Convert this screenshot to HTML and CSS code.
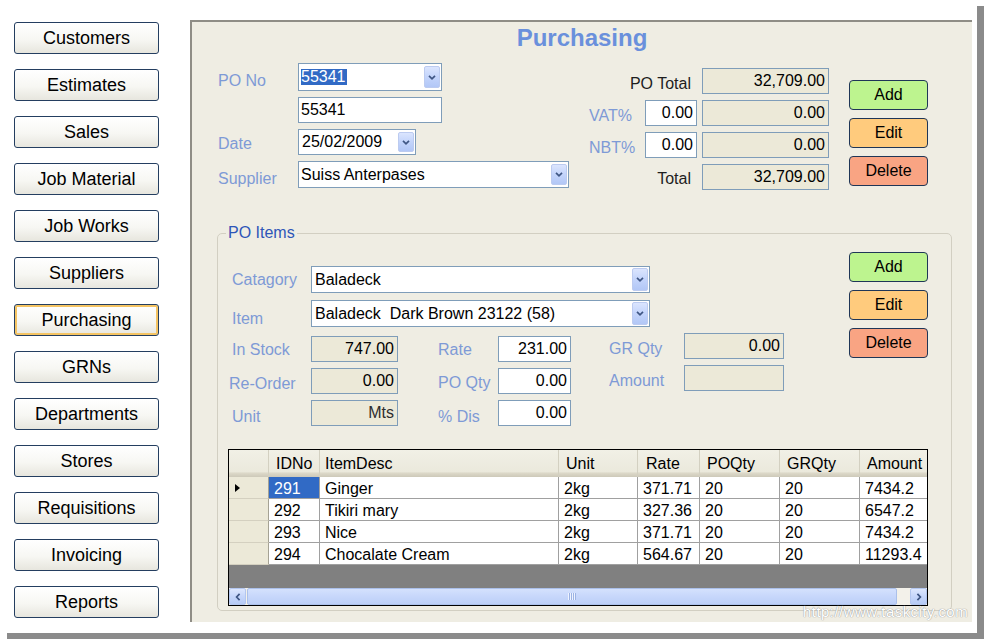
FILE: index.html
```html
<!DOCTYPE html>
<html>
<head>
<meta charset="utf-8">
<title>Purchasing</title>
<link rel="stylesheet" href="styles.css">
</head>
<body>
<div class="screen">
  <nav class="sidebar">
    <button class="navbtn">Customers</button>
    <button class="navbtn">Estimates</button>
    <button class="navbtn">Sales</button>
    <button class="navbtn">Job Material</button>
    <button class="navbtn">Job Works</button>
    <button class="navbtn">Suppliers</button>
    <button class="navbtn active">Purchasing</button>
    <button class="navbtn">GRNs</button>
    <button class="navbtn">Departments</button>
    <button class="navbtn">Stores</button>
    <button class="navbtn">Requisitions</button>
    <button class="navbtn">Invoicing</button>
    <button class="navbtn">Reports</button>
  </nav>

  <main class="panel">
    <h1 class="title">Purchasing</h1>

    <section class="po-top">
      <div class="po-fields">
        <div class="frow r1">
          <span class="flabel">PO No</span>
          <div class="combo w144 h28"><span class="ctext"><span class="seltext">55341</span></span><span class="dd"><svg width="8" height="5" viewBox="0 0 8 5"><path d="M1 0.8 L4 3.8 L7 0.8" fill="none" stroke="#3f5684" stroke-width="1.7"/></svg></span></div>
        </div>
        <div class="frow r2">
          <span class="flabel"></span>
          <div class="tbox w144 h26">55341</div>
        </div>
        <div class="frow r3">
          <span class="flabel">Date</span>
          <div class="combo w118 h26"><span class="ctext pl1">25/02/2009</span><span class="dd"><svg width="8" height="5" viewBox="0 0 8 5"><path d="M1 0.8 L4 3.8 L7 0.8" fill="none" stroke="#3f5684" stroke-width="1.7"/></svg></span></div>
        </div>
        <div class="frow r4">
          <span class="flabel">Supplier</span>
          <div class="combo w272 h27"><span class="ctext">Suiss Anterpases</span><span class="dd"><svg width="8" height="5" viewBox="0 0 8 5"><path d="M1 0.8 L4 3.8 L7 0.8" fill="none" stroke="#3f5684" stroke-width="1.7"/></svg></span></div>
        </div>
      </div>

      <div class="totals">
        <span class="tlabel dark span2">PO Total</span>
        <div class="robox num tcol">32,709.00</div>
        <span class="tlabel">VAT%</span>
        <div class="tbox num">0.00</div>
        <div class="robox num tcol">0.00</div>
        <span class="tlabel">NBT%</span>
        <div class="tbox num">0.00</div>
        <div class="robox num tcol">0.00</div>
        <span class="tlabel dark span2 pt6">Total</span>
        <div class="robox num tcol">32,709.00</div>
      </div>

      <div class="actions top-actions">
        <button class="act add">Add</button>
        <button class="act edit">Edit</button>
        <button class="act delete">Delete</button>
      </div>
    </section>

    <fieldset class="items">
      <legend>PO Items</legend>
      <div class="items-top">
        <div class="item-fields">
          <div class="irow h27">
            <span class="ilabel c1 pt5 pl3">Catagory</span>
            <div class="combo w339 h27"><span class="ctext pl1">Baladeck</span><span class="dd dd24"><svg width="8" height="5" viewBox="0 0 8 5"><path d="M1 0.8 L4 3.8 L7 0.8" fill="none" stroke="#3f5684" stroke-width="1.7"/></svg></span></div>
          </div>
          <div class="irow h27 mt7">
            <span class="ilabel c1 pt10 pl3">Item</span>
            <div class="combo w339 h27"><span class="ctext pl1">Baladeck&nbsp; Dark Brown 23122 (58)</span><span class="dd dd24"><svg width="8" height="5" viewBox="0 0 8 5"><path d="M1 0.8 L4 3.8 L7 0.8" fill="none" stroke="#3f5684" stroke-width="1.7"/></svg></span></div>
          </div>
          <div class="irow h26 mt9">
            <span class="ilabel c1 pt5 pl3">In Stock</span>
            <div class="robox num w87">747.00</div>
            <span class="ilabel c3 pt5">Rate</span>
            <div class="tbox num w73">231.00</div>
            <span class="ilabel c5 pt4">GR Qty</span>
            <div class="robox num w100 up3">0.00</div>
          </div>
          <div class="irow h26 mt6">
            <span class="ilabel c1 pt7">Re-Order</span>
            <div class="robox num w87">0.00</div>
            <span class="ilabel c3 pt6">PO Qty</span>
            <div class="tbox num w73">0.00</div>
            <span class="ilabel c5 pt4">Amount</span>
            <div class="robox num w100 up3"></div>
          </div>
          <div class="irow h26 mt6">
            <span class="ilabel c1 pt8 pl3">Unit</span>
            <div class="robox num w87 dim">Mts</div>
            <span class="ilabel c3 pt8">% Dis</span>
            <div class="tbox num w73">0.00</div>
          </div>
        </div>
        <div class="actions item-actions">
          <button class="act add">Add</button>
          <button class="act edit">Edit</button>
          <button class="act delete">Delete</button>
        </div>
      </div>

      <div class="dgv">
        <div class="dg-row dg-head">
          <div class="hc"></div>
          <div class="hc">IDNo</div>
          <div class="hc hc5">ItemDesc</div>
          <div class="hc">Unit</div>
          <div class="hc hc8">Rate</div>
          <div class="hc">POQty</div>
          <div class="hc">GRQty</div>
          <div class="hc last">Amount</div>
        </div>
        <div class="dg-row">
          <div class="rh"><span class="tri"></span></div>
          <div class="c selcell">291</div>
          <div class="c">Ginger</div>
          <div class="c">2kg</div>
          <div class="c">371.71</div>
          <div class="c">20</div>
          <div class="c">20</div>
          <div class="c last">7434.2</div>
        </div>
        <div class="dg-row">
          <div class="rh"></div>
          <div class="c">292</div>
          <div class="c">Tikiri mary</div>
          <div class="c">2kg</div>
          <div class="c">327.36</div>
          <div class="c">20</div>
          <div class="c">20</div>
          <div class="c last">6547.2</div>
        </div>
        <div class="dg-row">
          <div class="rh"></div>
          <div class="c">293</div>
          <div class="c">Nice</div>
          <div class="c">2kg</div>
          <div class="c">371.71</div>
          <div class="c">20</div>
          <div class="c">20</div>
          <div class="c last">7434.2</div>
        </div>
        <div class="dg-row">
          <div class="rh"></div>
          <div class="c">294</div>
          <div class="c">Chocalate Cream</div>
          <div class="c">2kg</div>
          <div class="c">564.67</div>
          <div class="c">20</div>
          <div class="c">20</div>
          <div class="c last">11293.4</div>
        </div>
        <div class="dg-empty"></div>
        <div class="hscroll">
          <span class="sb-btn"><svg width="6" height="8" viewBox="0 0 6 8"><path d="M4.6 0.8 L1.6 4 L4.6 7.2" fill="none" stroke="#3f5684" stroke-width="1.7"/></svg></span>
          <span class="sb-thumb"><span class="grip"></span></span>
          <span class="sb-btn sb-right"><svg width="6" height="8" viewBox="0 0 6 8"><path d="M1.4 0.8 L4.4 4 L1.4 7.2" fill="none" stroke="#3f5684" stroke-width="1.7"/></svg></span>
        </div>
      </div>
    </fieldset>
  </main>

  <div class="watermark">http://www.taskcity.com</div>
</div>
</body>
</html>
```

FILE: styles.css
```css
* { box-sizing: border-box; }

html, body {
  margin: 0;
  padding: 0;
  background: #ffffff;
}

body {
  font-family: "Liberation Sans", Arial, sans-serif;
  font-size: 16px;
  color: #000;
  width: 984px;
  height: 639px;
  overflow: hidden;
}

.screen {
  position: relative;
  width: 977px;
  height: 633px;
  background: #ffffff;
  box-shadow: 7px 6px 0 #8b8b8b;
  display: flex;
  align-items: flex-start;
}

/* ---------- sidebar ---------- */
.sidebar {
  width: 190px;
  flex: none;
  padding: 22px 0 0 14px;
  display: flex;
  flex-direction: column;
  gap: 15px;
}

.navbtn {
  width: 145px;
  height: 32px;
  padding: 0;
  border: 1px solid #243e60;
  border-radius: 3px;
  background: linear-gradient(#ffffff 0%, #f7f7f3 55%, #e7e6de 100%);
  font-family: "Liberation Sans", Arial, sans-serif;
  font-size: 18px;
  line-height: 30px;
  color: #000;
  text-align: center;
}

.navbtn.active {
  box-shadow: inset 0 0 0 2px #f5c463;
}

/* ---------- main panel ---------- */
.panel {
  margin-top: 20px;
  width: 782px;
  height: 602px;
  border-left: 2px solid #8f8d86;
  border-top: 2px solid #8f8d86;
  background: #efede3;
}

.title {
  margin: 2px 0 0;
  font-family: "Liberation Sans", Arial, sans-serif;
  font-weight: bold;
  font-size: 24px;
  line-height: 28px;
  color: #6a90dc;
  text-align: center;
}

.po-top {
  display: flex;
  align-items: flex-start;
  margin-top: 11px;
  padding-left: 26px;
}

.po-fields {
  width: 351px;
  flex: none;
}

.frow {
  display: flex;
  align-items: flex-start;
}

.flabel {
  width: 80px;
  flex: none;
  color: #7e9ad6;
  line-height: 18px;
}

.r1 .flabel { padding-top: 9px; }
.r2 { margin-top: 6px; }
.r3 { margin-top: 6px; }
.r3 .flabel { padding-top: 6px; }
.r4 { margin-top: 6px; }
.r4 .flabel { padding-top: 9px; }

/* ---------- inputs ---------- */
.combo, .tbox, .robox {
  border: 1px solid #7f9db9;
  background: #ffffff;
  display: flex;
  align-items: center;
  line-height: 18px;
  white-space: nowrap;
  overflow: hidden;
  height: 26px;
}

.combo { padding: 0 1px 0 2px; }
.tbox { padding: 0 3px 0 2px; }
.robox { background: #ece9d8; padding: 0 3px 0 2px; }
.num { justify-content: flex-end; }
.dim { color: #2e2e2e; }

.ctext { flex: 1; overflow: hidden; }
.pl1 { padding-left: 1px; }

.seltext {
  display: inline-block;
  line-height: 16px;
  background: #316ac5;
  color: #ffffff;
  padding: 0 1px 0 0;
}

.dd {
  width: 16px;
  flex: none;
  align-self: stretch;
  margin: 2px 0;
  border: 1px solid #bccbf0;
  border-radius: 2px;
  background: linear-gradient(#dbe5fe 0%, #c3d4fb 50%, #b2c7f6 100%);
  display: flex;
  align-items: center;
  justify-content: center;
}

.dd24 { margin: 1px 0; }

.w144 { width: 144px; }
.w118 { width: 118px; }
.w272 { width: 272px; }
.w339 { width: 339px; }
.w87 { width: 87px; flex: none; }
.w73 { width: 73px; flex: none; }
.w100 { width: 100px; flex: none; }
.h28 { height: 28px; }
.h26 { height: 26px; }
.h27 { height: 27px; }

/* ---------- totals ---------- */
.totals {
  margin-left: 20px;
  margin-top: 5px;
  display: grid;
  grid-template-columns: 56px 52px 5px 127px;
  grid-auto-rows: 26px;
  row-gap: 6px;
  width: 240px;
  flex: none;
}

.tlabel {
  color: #7e9ad6;
  line-height: 18px;
  padding-top: 7px;
}

.tlabel.dark { color: #1e1e1e; }
.span2 { grid-column: 1 / 3; text-align: right; padding-right: 6px; }
.tlabel.pt6 { padding-top: 6px; }
.tcol { grid-column: 4; }

/* ---------- action buttons ---------- */
.actions {
  display: flex;
  flex-direction: column;
  gap: 8px;
  width: 79px;
  flex: none;
}

.top-actions {
  margin-left: 20px;
  margin-top: 17px;
}

.act {
  height: 30px;
  padding: 0;
  border: 1px solid #1f3657;
  border-radius: 4px;
  font-family: "Liberation Sans", Arial, sans-serif;
  font-size: 16px;
  line-height: 28px;
  color: #000;
}

.add { background: #bdf48f; }
.edit { background: #ffcb7d; }
.delete { background: #f9a483; }

/* ---------- PO items group ---------- */
.items {
  margin: 34px 0 0 25px;
  width: 735px;
  min-width: 0;
  padding: 10px 23px 4px 10px;
  border: 1px solid #d2cfc2;
  border-radius: 5px;
}

.items legend {
  margin-left: -2px;
  padding: 0 2px;
  font-size: 16px;
  line-height: 18px;
  color: #2d56b8;
}

.items-top {
  display: flex;
  align-items: flex-start;
}

.item-fields {
  margin: 14px 0 0 1px;
  width: 555px;
}

.irow {
  display: flex;
  align-items: flex-start;
}

.mt6 { margin-top: 6px; }
.mt7 { margin-top: 7px; }
.mt9 { margin-top: 9px; }

.ilabel {
  flex: none;
  color: #7e9ad6;
  line-height: 18px;
  white-space: nowrap;
}

.c1 { width: 82px; }
.c3 { width: 100px; padding-left: 40px; }
.c5 { width: 113px; padding-left: 38px; }
.pl3 { padding-left: 3px; }
.pt4 { padding-top: 4px; }
.pt5 { padding-top: 5px; }
.pt6 { padding-top: 6px; }
.pt7 { padding-top: 7px; }
.pt8 { padding-top: 8px; }
.pt10 { padding-top: 10px; }
.up3 { margin-top: -3px; }

.item-actions { margin-left: auto; }

/* ---------- data grid ---------- */
.dgv {
  margin-top: 23px;
  width: 700px;
  height: 157px;
  border: 1px solid #000;
  background: #808080;
  display: flex;
  flex-direction: column;
}

.dg-row {
  display: grid;
  grid-template-columns: 40px 51px 239px 79px 62px 80px 80px 67px;
  flex: none;
  height: 22px;
  background: #ffffff;
}

.dg-head {
  height: 27px;
  background: linear-gradient(#f1f0e6 0%, #ebe9dc 80%, #dcd8c8 86%, #cdc9b9 100%);
}

.hc {
  line-height: 26px;
  padding: 1px 0 0 7px;
  border-right: 1px solid #d3d0c1;
  white-space: nowrap;
  overflow: hidden;
}

.hc5 { padding-left: 5px; }
.hc8 { padding-left: 8px; }

.c {
  height: 22px;
  line-height: 20px;
  padding: 2px 0 0 5px;
  border-right: 1px solid #a0a0a0;
  border-bottom: 1px solid #a0a0a0;
  white-space: nowrap;
  overflow: hidden;
}

.last { border-right: none; }

.selcell {
  background: #316ac5;
  color: #ffffff;
}

.rh {
  height: 22px;
  background: #ece9d8;
  border-right: 1px solid #a5a294;
  border-bottom: 1px solid #d4d0c0;
  display: flex;
  align-items: center;
  padding-left: 6px;
}

.tri {
  width: 0;
  height: 0;
  border-left: 5px solid #000;
  border-top: 4px solid transparent;
  border-bottom: 4px solid transparent;
}

.dg-empty {
  flex: 1;
  background: #808080;
}

.hscroll {
  height: 17px;
  flex: none;
  display: flex;
  background: #f3f1ea;
}

.sb-btn {
  width: 17px;
  flex: none;
  border: 1px solid #b3c6ef;
  border-radius: 2px;
  background: linear-gradient(#dde7fe 0%, #c6d6fb 50%, #b6cbf6 100%);
  display: flex;
  align-items: center;
  justify-content: center;
}

.sb-thumb {
  width: 650px;
  flex: none;
  margin-left: 1px;
  border: 1px solid #abc0ea;
  border-radius: 2px;
  background: linear-gradient(#d4e1fd 0%, #c7d7fb 50%, #bccff7 100%);
  display: flex;
  align-items: center;
  justify-content: center;
}

.grip {
  width: 8px;
  height: 7px;
  background: repeating-linear-gradient(90deg, #eef3ff 0 1px, #9cb3e4 1px 2px);
}

.sb-right { margin-left: auto; }

/* ---------- watermark ---------- */
.watermark {
  position: absolute;
  left: 803px;
  top: 604px;
  font-size: 15px;
  line-height: 16px;
  letter-spacing: 0.45px;
  color: #ffffff;
  text-shadow: 0 0 1px #9a9a9a, 0 0 1px #9a9a9a;
  white-space: nowrap;
}
```
